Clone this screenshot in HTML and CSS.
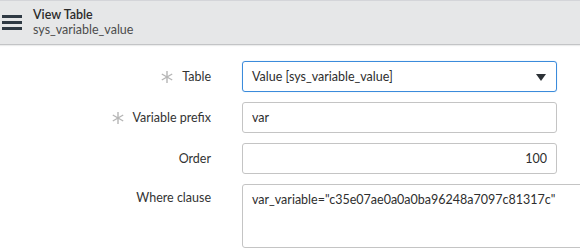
FILE: index.html
```html
<!DOCTYPE html>
<html lang="en">
<head>
    <meta charset="UTF-8">
    <title>View Table - sys_variable_value</title>
    <link rel="stylesheet" href="styles.css">
</head>
<body>
    <div class="header">
        <div class="menu-icon">
            <span></span><span></span><span></span>
        </div>
        <div class="header-title">
            <div class="title">View Table</div>
            <div class="subtitle">sys_variable_value</div>
        </div>
    </div>

    <form class="form">
        <div class="form-label">
            <svg class="mandatory" viewBox="0 0 12 12" width="12" height="12">
                <line x1="6" y1="0" x2="6" y2="12"/>
                <line x1="0.8" y1="3" x2="11.2" y2="9"/>
                <line x1="0.8" y1="9" x2="11.2" y2="3"/>
            </svg>Table
        </div>
        <div class="form-field">
            <div class="select-box">
                <span>Value [sys_variable_value]</span>
                <span class="caret"></span>
            </div>
        </div>

        <div class="form-label">
            <svg class="mandatory" viewBox="0 0 12 12" width="12" height="12">
                <line x1="6" y1="0" x2="6" y2="12"/>
                <line x1="0.8" y1="3" x2="11.2" y2="9"/>
                <line x1="0.8" y1="9" x2="11.2" y2="3"/>
            </svg>Variable prefix
        </div>
        <div class="form-field">
            <input class="text-input" type="text" value="var">
        </div>

        <div class="form-label">Order</div>
        <div class="form-field">
            <input class="text-input number" type="text" value="100">
        </div>

        <div class="form-label top">Where clause</div>
        <div class="form-field tall">
            <textarea class="text-area">var_variable="c35e07ae0a0a0ba96248a7097c81317c"</textarea>
        </div>
    </form>
</body>
</html>
```

FILE: styles.css
```css
body {
    margin: 0;
    font-family: 'Lato', 'Open Sans', sans-serif;
    font-size: 12.5px;
    color: #2e2e2e;
    background: #fff;
    overflow: hidden;
}
.header {
    display: flex;
    align-items: center;
    height: 43px;
    background: #e6e7e8;
    border-top: 1px solid #d4d5d9;
    border-bottom: 1px solid #c3c4c6;
    box-shadow: 0 1px 1px #eceded;
}
.menu-icon {
    display: flex;
    flex-direction: column;
    gap: 3px;
    width: 20px;
    margin: 0 11px 0 2px;
}
.menu-icon span {
    display: block;
    height: 3px;
    background: #2f3a44;
}
.header-title {
    line-height: 15px;
    margin-top: -2px;
}
.title {
    font-weight: 600;
    color: #2b2b2b;
}
.subtitle {
    color: #4c4c4c;
}
.form {
    display: grid;
    grid-template-columns: 211px 315px;
    column-gap: 31px;
    row-gap: 10px;
    margin-top: 16px;
}
.form-label {
    display: flex;
    align-items: center;
    justify-content: flex-end;
    height: 31px;
    color: #333;
}
.form-label.top {
    align-items: flex-start;
    height: auto;
    padding-top: 6px;
}
.mandatory {
    stroke: #b5b5b5;
    stroke-width: 1.4;
    margin-right: 9px;
}
.form-field {
    height: 31px;
}
.form-field.tall {
    height: 64px;
}
.select-box {
    display: flex;
    align-items: center;
    justify-content: space-between;
    box-sizing: border-box;
    height: 31px;
    padding: 0 10px 0 9px;
    border: 1px solid #3b8bdb;
    border-radius: 3px;
    box-shadow: 0 0 1px #9cc5ee;
}
.caret {
    width: 0;
    height: 0;
    border-left: 5px solid transparent;
    border-right: 5px solid transparent;
    border-top: 7px solid #2c3136;
    margin-top: 2px;
}
.text-input,
.text-area {
    box-sizing: border-box;
    width: 100%;
    height: 31px;
    padding: 0 9px;
    border: 1px solid #c4c4c4;
    border-radius: 3px;
    font-family: inherit;
    font-size: 12.5px;
    color: #2e2e2e;
    outline: none;
}
.text-input.number {
    text-align: right;
}
.text-area {
    display: block;
    width: 400px;
    height: 64px;
    padding: 7px 9px;
    resize: none;
    line-height: 16px;
}
```
